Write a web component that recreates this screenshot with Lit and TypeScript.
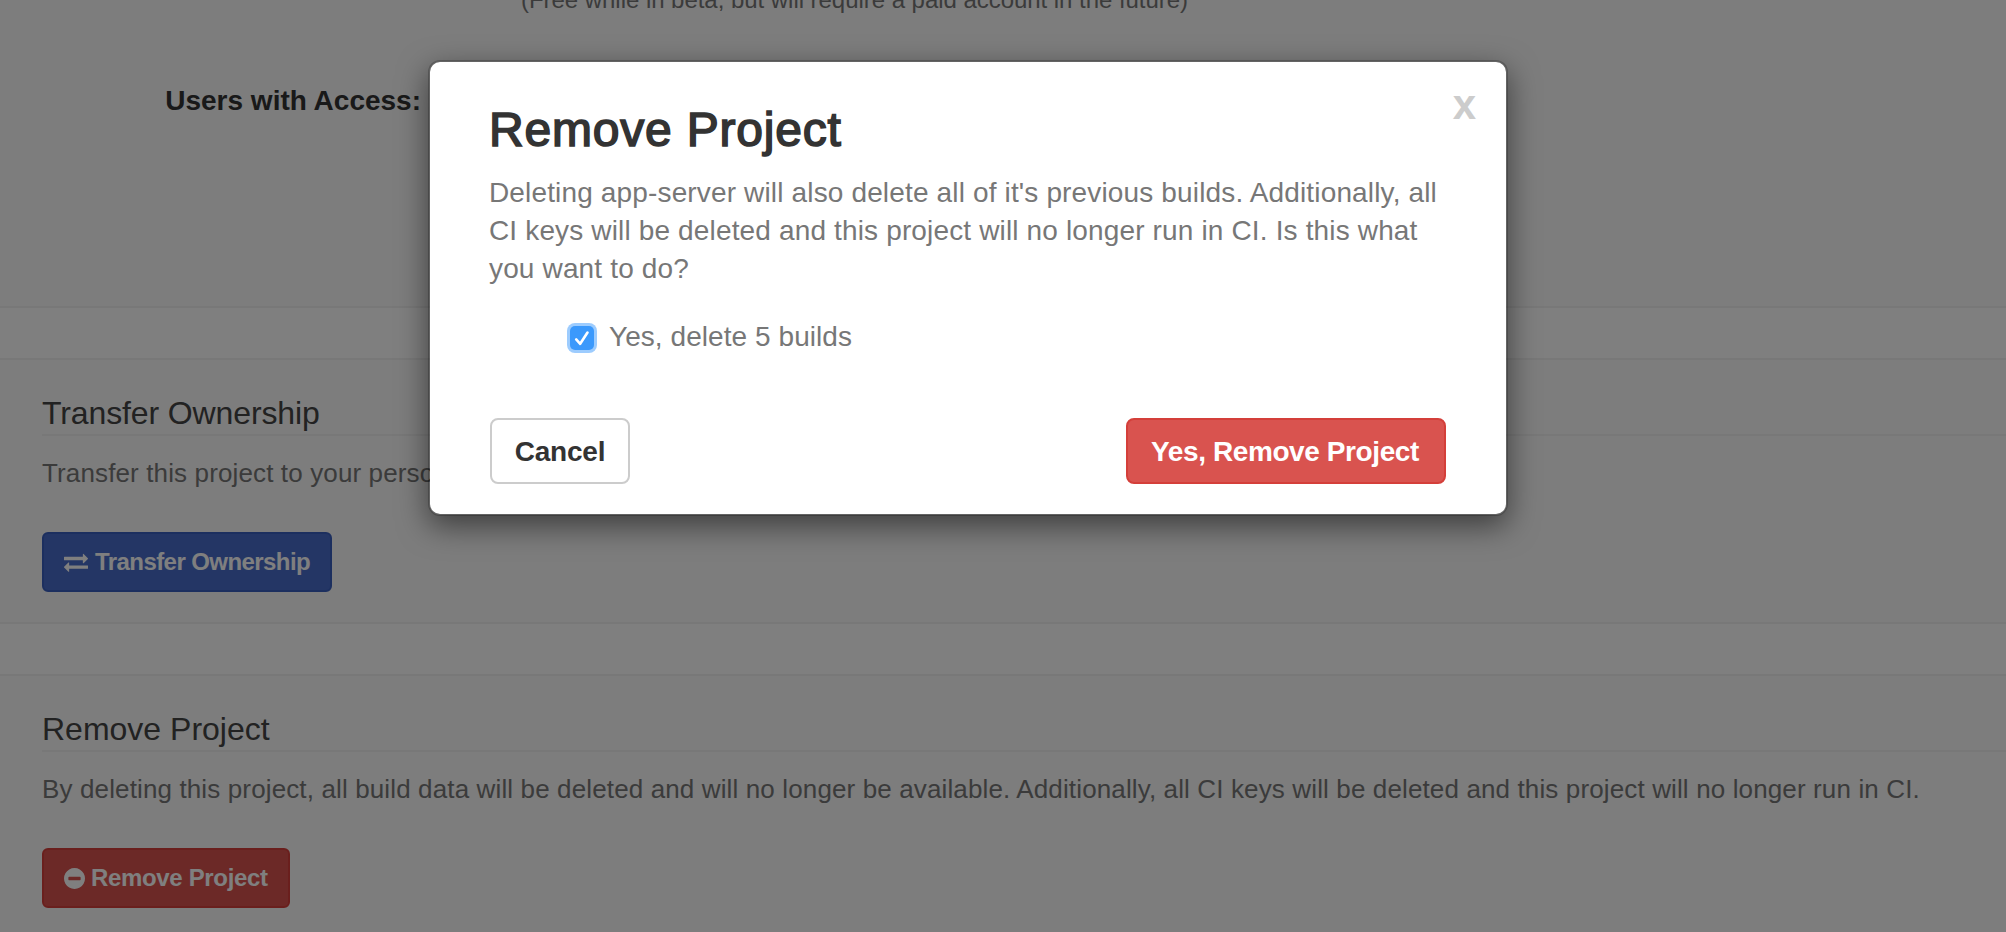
import { LitElement, html, css } from "lit";
import { customElement } from "lit/decorators.js";

const exchangeIcon = html`<svg class="icon" width="24" height="24" viewBox="0 0 1792 1792" fill="currentColor"><path d="M1792 1184v192q0 13-9.500 22.500t-22.500 9.500h-1376v192q0 13-9.500 22.500t-22.500 9.500q-12 0-24-10l-319-320q-9-9-9-22 0-14 9-23l320-320q9-9 23-9 13 0 22.500 9.500t9.500 22.500v192h1376q13 0 22.500 9.500t9.500 22.500zm0-544q0 14-9 23l-320 320q-9 9-23 9-13 0-22.500-9.500t-9.500-22.500v-192h-1376q-13 0-22.500-9.500t-9.500-22.500v-192q0-13 9.500-22.500t22.500-9.500h1376v-192q0-14 9-23t23-9q12 0 24 10l319 319q9 9 9 23z"/></svg>`;

const minusCircleIcon = html`<svg class="icon" width="21" height="21" viewBox="128 128 1536 1536" fill="currentColor"><path d="M1344 960v-128q0-26-19-45t-45-19h-768q-26 0-45 19t-19 45v128q0 26 19 45t45 19h768q26 0 45-19t19-45zm320-64q0 209-103 385.500t-279.500 279.500-385.500 103-385.500-103-279.500-279.500-103-385.500 103-385.500 279.500-279.500 385.500-103 385.500 103 279.500 279.500 103 385.500z"/></svg>`;

@customElement("confirm-dialog")
export class ConfirmDialog extends LitElement {
  static styles = css`
    :host {
      display: block;
      box-sizing: border-box;
      width: 1080px;
      padding: 42px 60px 30px;
      background: #fff;
      background-clip: padding-box;
      border: 2px solid rgba(0, 0, 0, 0.2);
      border-radius: 12px;
      box-shadow: 0 10px 30px rgba(0, 0, 0, 0.5);
      color: #777;
      font-size: 28px;
    }
    .head {
      display: flex;
      justify-content: space-between;
      margin-left: -1px;
    }
    h3 {
      margin: 0;
      color: #333;
      font-size: 48px;
      line-height: 52px;
      font-weight: 400;
      letter-spacing: 0.8px;
      -webkit-text-stroke: 1.6px #333;
    }
    .close {
      margin: -25px -30px 0 0;
      color: #ccc;
      font-size: 42px;
      font-weight: 700;
      line-height: 52px;
    }
    p {
      margin: 18px -10px 30px -1px;
      line-height: 38px;
      letter-spacing: 0.15px;
    }
    .check {
      display: flex;
      align-items: center;
      gap: 15px;
      height: 38px;
      margin: 0 0 62px 80px;
      letter-spacing: 0.06px;
    }
    .box {
      display: block;
      width: 24px;
      height: 24px;
      margin-top: 2px;
      border-radius: 5px;
      background: #3b99fc;
      box-shadow: 0 0 0 3px #9dccfe;
    }
    .actions {
      display: flex;
      justify-content: space-between;
    }
    button {
      box-sizing: border-box;
      width: 140px;
      height: 66px;
      padding: 2px 0 0;
      border: 2px solid #ccc;
      border-radius: 8px;
      background: #fff;
      color: #333;
      font: inherit;
      font-weight: 700;
      letter-spacing: -0.2px;
    }
    .danger {
      width: 320px;
      padding-right: 2px;
      border-color: #d43f3a;
      background: #d9534f;
      color: #fff;
      letter-spacing: -0.4px;
    }
  `;

  render() {
    return html`
      <div class="head">
        <h3>Remove Project</h3>
        <span class="close">x</span>
      </div>
      <p>
        Deleting app-server will also delete all of it's previous builds. Additionally, all<br />
        CI keys will be deleted and this project will no longer run in CI. Is this what<br />
        you want to do?
      </p>
      <div class="check">
        <svg class="box" viewBox="0 0 24 24" fill="none" stroke="#fff" stroke-width="2.600" stroke-linecap="round" stroke-linejoin="round">
          <path d="M6.200 13.400l4 4.400 7.300-11.300" />
        </svg>
        <span>Yes, delete 5 builds</span>
      </div>
      <div class="actions">
        <button>Cancel</button>
        <button class="danger">Yes, Remove Project</button>
      </div>
    `;
  }
}

@customElement("app-root")
export class AppRoot extends LitElement {
  static styles = css`
    :host {
      display: block;
      position: relative;
      height: 932px;
      overflow: hidden;
      background: #fff;
      color: #777;
      font-family: "Liberation Sans", Arial, sans-serif;
    }
    .page {
      display: flex;
      flex-direction: column;
      gap: 50px;
    }
    .panel {
      padding: 32px 0 30px 42px;
      border: solid #f0f0f0;
      border-width: 2px 0;
      background: #fafafa;
    }
    .access {
      box-sizing: border-box;
      height: 308px;
      padding: 0;
      border-top: 0;
    }
    .note {
      margin: -19px 0 63px 522px;
      font-size: 24px;
      line-height: 37px;
      letter-spacing: -0.04px;
    }
    .label {
      width: 421px;
      color: #333;
      font-size: 28px;
      font-weight: 700;
      line-height: 40px;
      text-align: right;
    }
    .access .note {
      margin-left: 521px;
    }
    h4 {
      margin: 0 0 18px;
      border-bottom: 2px solid #f0f0f0;
      color: #444;
      font-size: 32px;
      font-weight: 400;
      line-height: 42px;
    }
    .tight {
      letter-spacing: -0.12px;
    }
    .panel p {
      margin: 0 0 40px;
      font-size: 26px;
      line-height: 38px;
      letter-spacing: 0.13px;
      white-space: nowrap;
    }
    .btn {
      display: flex;
      align-items: center;
      box-sizing: border-box;
      height: 60px;
      padding: 0 20px;
      border: 2px solid;
      border-radius: 6px;
      color: #fff;
      font: inherit;
      font-size: 24px;
      font-weight: 700;
      white-space: nowrap;
    }
    .primary {
      width: 290px;
      gap: 7px;
      border-color: #385ebe;
      background: #486cca;
      letter-spacing: -0.57px;
    }
    .danger {
      width: 248px;
      gap: 6px;
      border-color: #d43f3a;
      background: #d9534f;
      letter-spacing: -0.34px;
    }
    .icon {
      flex: none;
    }
    .overlay {
      position: absolute;
      inset: 0;
      display: flex;
      align-items: flex-start;
      padding: 60px 0 0 428px;
      background: rgba(0, 0, 0, 0.5);
    }
  `;

  render() {
    return html`
      <div class="page">
        <section class="panel access">
          <div class="note">(Free while in beta, but will require a paid account in the future)</div>
          <div class="label">Users with Access:</div>
        </section>
        <section class="panel">
          <h4 class="tight">Transfer Ownership</h4>
          <p>Transfer this project to your personal account.</p>
          <button class="btn primary">${exchangeIcon}<span>Transfer Ownership</span></button>
        </section>
        <section class="panel">
          <h4>Remove Project</h4>
          <p>By deleting this project, all build data will be deleted and will no longer be available. Additionally, all CI keys will be deleted and this project will no longer run in CI.</p>
          <button class="btn danger">${minusCircleIcon}<span>Remove Project</span></button>
        </section>
      </div>
      <div class="overlay"><confirm-dialog></confirm-dialog></div>
    `;
  }
}
